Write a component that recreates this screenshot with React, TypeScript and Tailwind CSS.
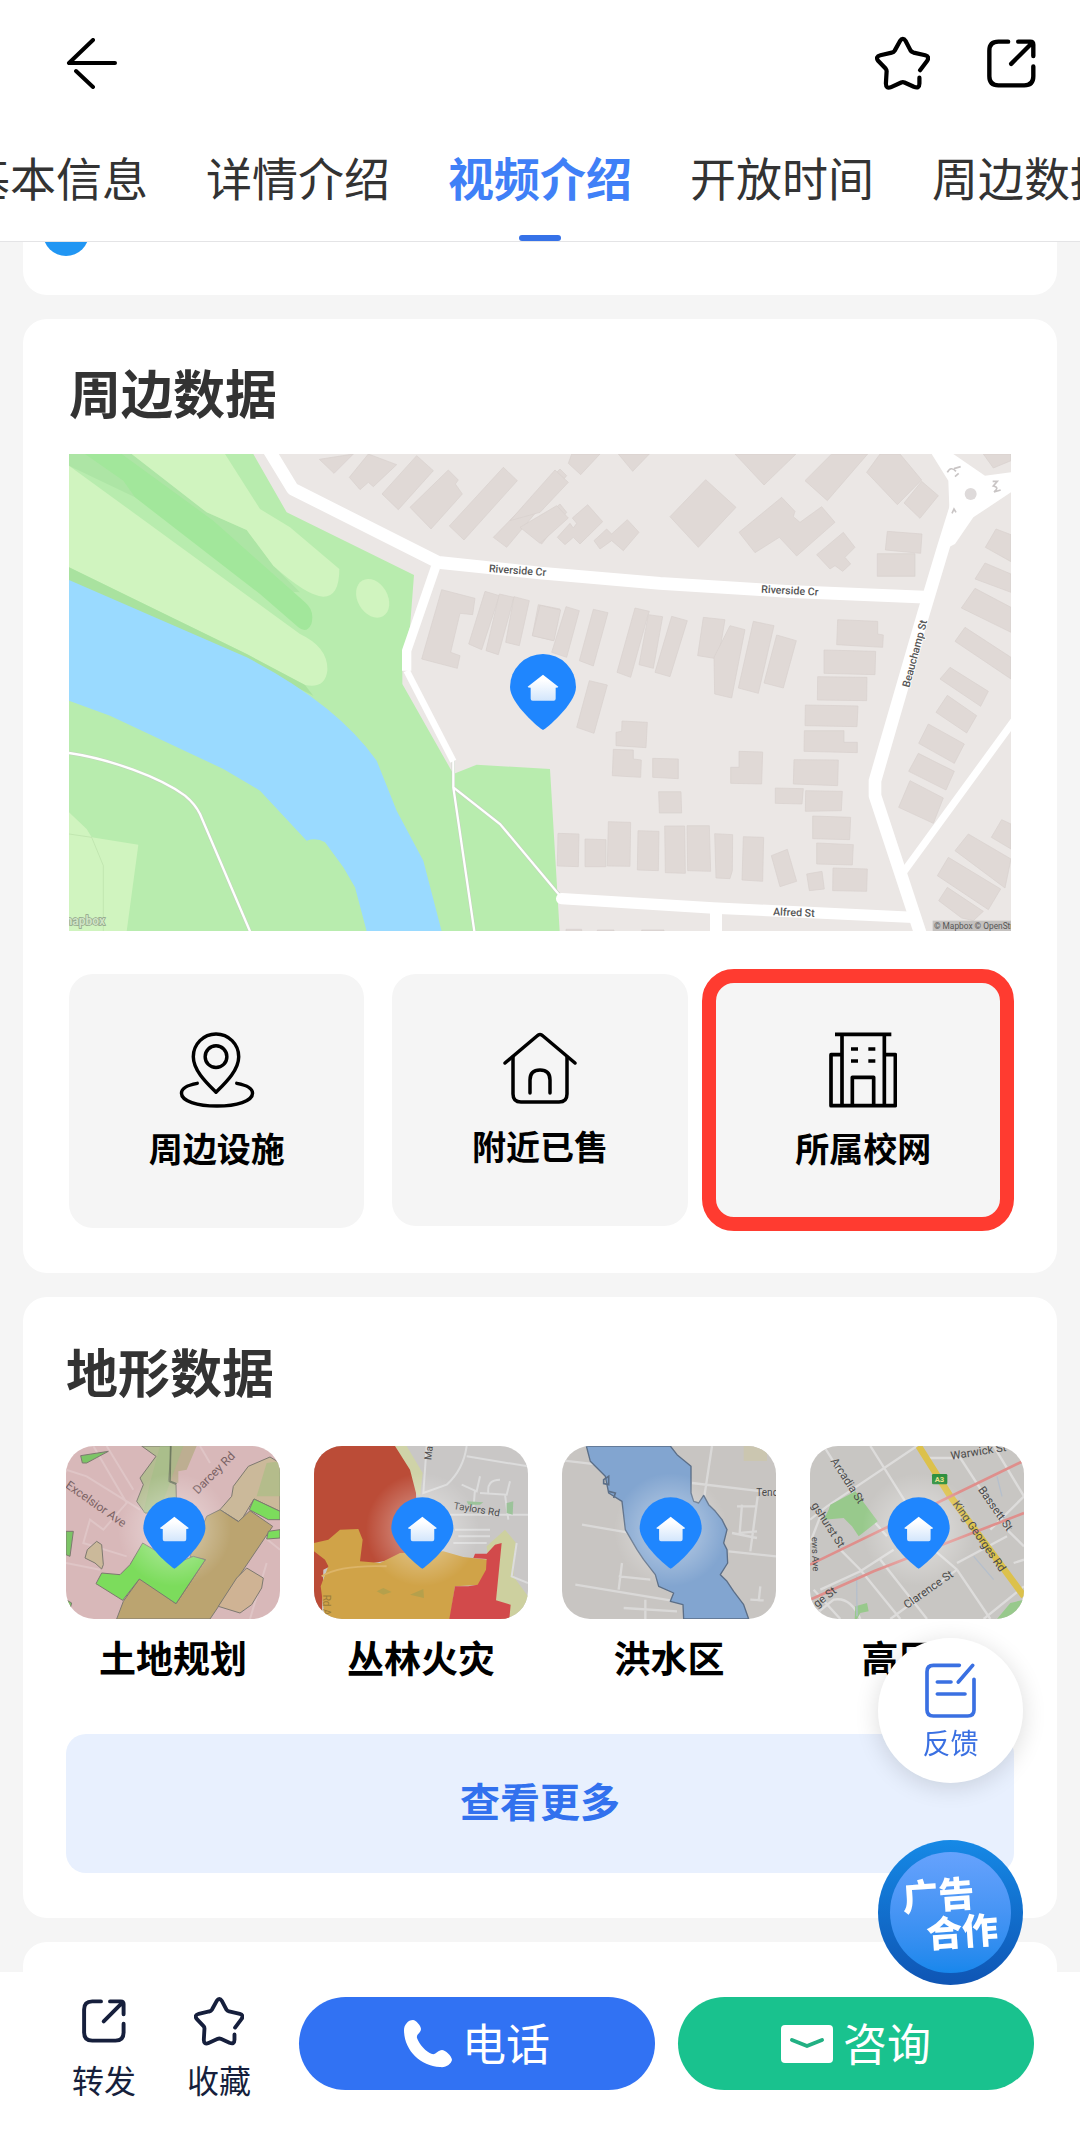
import React, { useState } from "react";
import clsx from "clsx";

const tabs = ["基本信息", "详情介绍", "视频介绍", "开放时间", "周边数据"];

type IconProps = { className?: string };

/* ---------- icons ---------- */

const BackIcon = ({ className }: IconProps) => (
    <svg viewBox="66 38 51 51" className={className} fill="none" stroke="currentColor" strokeWidth="4" strokeLinecap="round" strokeLinejoin="round">
        <path d="M93 40L69 63H115M76 71L93 87" />
    </svg>
);

const StarIcon = ({ className }: IconProps) => (
    <svg viewBox="42 44 168 166" className={className} fill="none" stroke="currentColor" strokeWidth="13" strokeLinecap="round" strokeLinejoin="round">
        <path d="M180 149L202 120Q210 107 196 103L160 95Q154 93 151 89L136 60Q127 46 118 60L102 89Q99 94 93 95L58 103Q42 107 51 120L74 144Q78 149 77 155L75 190Q75 208 91 201L122 187Q127 185 132 187L161 200Q178 207 178 190L178 172" />
    </svg>
);

const ShareIcon = ({ className }: IconProps) => (
    <svg viewBox="380 57 146 146" className={className} fill="none" stroke="currentColor" strokeWidth="13" strokeLinecap="round" strokeLinejoin="round">
        <path d="M443 65H414Q387 65 387 92V168Q387 195 414 195H491Q518 195 518 168V139" />
        <path d="M473 65H509Q518 65 518 74V108M514 69L452 131" />
    </svg>
);

const PlaceIcon = () => (
    <svg viewBox="1 0 76 77" className="w-[76px] h-[76px]" fill="none" stroke="currentColor" strokeWidth="3.5" strokeLinecap="round" strokeLinejoin="round">
        <path d="M38 61C29 52 15 39 15 25A23 23 0 0 1 61 25C61 39 47 52 38 61Z" />
        <circle cx="38" cy="25" r="11" />
        <path d="M18 52C7 54 2 58 2 62C2 70 18 75 38 75S74 70 74 62C74 58 69 54 58 52" transform="translate(1 0)" />
    </svg>
);

const HouseIcon = () => (
    <svg viewBox="0 0 76 74" className="w-[76px] h-[74px]" fill="none" stroke="currentColor" strokeWidth="3.5" strokeLinecap="round" strokeLinejoin="round">
        <path d="M3 31L35 4Q38 1 41 4L73 31" />
        <path d="M11 25V62Q11 70 19 70H57Q65 70 65 62V25" />
        <path d="M28 61V48Q28 38 38 38T48 48V61" />
    </svg>
);

const SchoolIcon = () => (
    <svg viewBox="446 244 204 228" className="w-[68px] h-[76px]" fill="none" stroke="currentColor" strokeWidth="11" strokeLinejoin="round">
        <path d="M464 251H633M485 251V465M612 251V465" />
        <path d="M485 312H452V465H645V312H612M516 465V380H580V465" />
        <path d="M512 295h21M564 295h21M512 331h21M564 331h21" />
    </svg>
);

const FeedbackIcon = () => (
    <svg viewBox="255 135 153 165" className="w-[51px] h-[55px]" fill="none" stroke="currentColor" strokeWidth="11" strokeLinecap="round" strokeLinejoin="round">
        <path d="M358 142H280Q261 142 261 161V276Q261 294 280 294H383Q402 294 402 276V184" />
        <path d="M398 142L355 192M292 192H333M292 228H375" />
    </svg>
);

const PhoneIcon = () => (
    <svg viewBox="0 0 48 48" className="w-12 h-12" fill="currentColor">
        <path d="M9 0C4 0 0 5 0 10C0 30 16 46 36 47C42 48 47 44 48 40C48 36 41 30 38 30C34 30 32 35 28 34C22 32 15 24 13 18C12 14 17 13 17 9C17 6 12 0 9 0Z" />
    </svg>
);

const MailIcon = () => (
    <svg viewBox="0 0 52 38" className="w-[52px] h-[38px]">
        <rect width="52" height="38" rx="4" fill="#fff" />
        <path d="M11 15L26 21L41 15" fill="none" stroke="#22b083" strokeWidth="4" strokeLinecap="round" strokeLinejoin="round" />
    </svg>
);

/* ---------- maps ---------- */

const Pin = ({ x, y, scale = 1 }: { x: number; y: number; scale?: number }) => (
    <g transform={`translate(${x} ${y}) scale(${scale})`}>
        <path d="M99 228C92 226 0 150 0 99A99 99 0 0 1 198 99C198 150 106 226 99 228Z" fill="#1f86fe" />
        <path d="M99 62L145 98Q145 101 137 101V134Q137 140 131 140H68Q62 140 62 134V101Q53 101 53 98Z" fill="url(#house)" />
    </g>
);

const blocksWest = [
    "778,56 880,40 822,98", "925,40 1010,72 940,138 925,125 900,147 868,110",
    "1070,45 1120,90 1015,207 966,160", "1165,88 1195,118 1186,130 1207,160 1113,265 1050,200",
    "1330,80 1372,120 1212,298 1168,256", "1500,85 1520,105 1340,320 1300,290",
    "1500,190 1520,215 1445,310 1407,275", "1145,447 1245,473 1238,522 1200,518 1172,635 1200,645 1192,683 1085,655",
    "1275,452 1318,465 1265,627 1226,610", "1318,460 1362,470 1315,642 1278,630", "1362,468 1408,480 1378,615 1337,605",
    "1435,492 1500,505 1480,600 1417,585",
];

const blocksEast = [
    "95,40 180,40 122,102 85,68", "235,40 328,40 278,92", "45,88 85,125 0,215 -90,240", "50,195 85,232 0,308 -60,260",
    "143,192 188,243 120,310 100,290 75,312 52,290 90,248 100,262 110,248 97,232", "262,237 297,275 250,330 215,300 180,325 162,300 200,265 215,280",
    "497,117 588,200 475,320 390,228", "585,40 768,40 672,133", "725,170 765,212 760,228 780,245 845,198 885,245 770,346 718,290 645,336 597,275",
    "875,40 983,40 862,180 795,120", "1020,40 1080,40 1145,118 1072,192 980,95", "1145,122 1195,165 1140,233 1092,187",
    "910,275 945,320 915,350 932,370 908,392 885,375 870,385 830,342", "1042,272 1146,280 1142,338 1036,328", "1012,339 1125,339 1125,407 1012,407",
    "1330,40 1413,40 1413,60 1360,82", "1368,265 1413,282 1413,363 1336,320", "1335,367 1413,400 1413,455 1305,415", "1305,443 1413,500 1413,575 1264,502",
    "1275,560 1413,650 1413,715 1245,602", "1230,680 1345,752 1322,797 1200,715", "1222,764 1310,825 1280,877 1188,815",
    "1165,850 1273,910 1243,968 1136,908", "1135,938 1243,992 1218,1048 1106,992", "1110,1020 1210,1072 1180,1148 1076,1100",
    "1385,1137 1413,1150 1413,1225 1354,1190", "1285,1180 1413,1255 1395,1342 1245,1230", "1225,1250 1382,1345 1345,1407 1192,1305", "1222,1340 1330,1412 1300,1440 1265,1432 1196,1380",
    "0,494 62,508 42,600 -23,585", "78,498 118,510 80,650 35,635", "160,506 204,516 160,676 118,660", "285,502 328,512 322,530 272,710 231,695",
    "325,522 368,528 340,683 297,672", "395,527 442,540 390,708 345,695", "148,720 202,733 162,878 110,860",
    "490,530 555,537 535,655 473,645", "570,555 615,567 575,772 524,760 522,650", "640,542 702,555 655,758 595,742", "710,583 769,600 730,742 672,727",
    "893,537 1013,542 1013,580 1030,583 1028,620 890,612", "852,628 1007,632 1005,702 852,698", "833,708 981,710 980,780 832,778", "796,793 954,796 951,858 795,855",
    "793,870 912,870 912,905 952,905 952,936 792,932", "762,957 895,958 893,1035 760,1030", "706,1042 790,1044 786,1090 706,1088", "797,1050 907,1052 904,1110 796,1112",
    "818,1126 932,1130 929,1197 818,1194", "830,1207 940,1212 937,1273 830,1270", "879,1282 982,1285 980,1352 878,1350",
    "246,841 322,845 318,921 228,915 228,875 245,872", "220,926 280,928 280,955 304,958 302,1010 217,1005", "338,953 415,955 415,1014 338,1010",
    "597,932 668,934 665,1030 572,1028 572,980 597,980", "356,1053 423,1053 425,1117 358,1117",
    "54,1178 117,1180 115,1278 52,1276", "135,1195 198,1197 198,1278 135,1278", "205,1143 272,1145 270,1277 202,1276", "294,1170 357,1172 355,1290 292,1288",
    "374,1156 434,1156 436,1298 376,1296", "441,1155 508,1155 512,1292 443,1290", "524,1179 578,1182 577,1290 570,1314 528,1312", "610,1188 671,1190 668,1322 606,1318",
    "742,1226 770,1322 720,1338 694,1245", "800,1300 846,1292 853,1345 808,1350",
    "78,1466 125,1466 125,1472 78,1472", "172,1468 222,1468 222,1472 172,1472", "305,1468 372,1468 372,1472 305,1472",
];

const AreaMap = () => (
    <svg viewBox="27 40 2826 1432" className="block w-full h-auto" fontFamily="Roboto, sans-serif" role="img" aria-label="周边地图">
        <defs>
            <linearGradient id="house" x1="0" y1="0" x2="0" y2="1">
                <stop offset="0.2" stopColor="#fff" />
                <stop offset="1" stopColor="#d3e6fc" />
            </linearGradient>
        </defs>
        <rect x="27" y="40" width="2826" height="1432" fill="#ebe7e5" />

        {/* park and river */}
        <path d="M27 40H580L680 215L1062 403L1050 560L1027 640V730L1180 1000L1250 972L1470 985L1499 1472H27Z" fill="#b8ecae" />
        <path d="M27 40H215L440 215L560 268L640 375L720 455L640 450L225 170L27 75Z" fill="#ade5a5" />
        <path d="M27 75L720 580Q805 620 802 690Q795 745 735 733L560 640L27 380Z" fill="#d0f4bf" />
        <path d="M27 380L560 640L735 733L760 765L560 665L27 430Z" fill="#a9e29f" />
        <path d="M215 40H495L600 205L690 260L838 385Q838 468 790 468Q740 465 640 375L560 268L440 215Z" fill="#d0f4bf" />
        <path d="M75 40H185L460 240L735 485Q765 510 754 550Q740 580 715 560L600 460L225 170L190 120Z" fill="#a2e79b" />
        <ellipse cx="938" cy="473" rx="45" ry="62" transform="rotate(-30 938 473)" fill="#d0f4bf" />
        <path d="M27 418L560 650Q830 790 950 960L1010 1110L1090 1260L1145 1472H920L885 1340L850 1280L795 1205Q770 1190 740 1200L600 1050L490 985L150 825L27 780Z" fill="#9adaff" />
        <path d="M27 1115L80 1165L95 1190L235 1212L200 1472H27Z" fill="#d0f4bf" />
        <path d="M27 1180L95 1190L130 1275V1472" fill="none" stroke="#b9dfa9" strokeWidth="2" />

        <g fill="#e0d9d6" stroke="#d8d0cd" strokeWidth="2">
            {blocksWest.map((points) => <polygon key={points} points={points} />)}
        </g>
        <g fill="#e0d9d6" stroke="#d8d0cd" strokeWidth="2" transform="translate(1440 0)">
            {blocksEast.map((points) => <polygon key={points} points={points} />)}
        </g>

        {/* footpaths */}
        <g fill="none" stroke="#c5cfc0" strokeWidth="10">
            <path d="M27 937C150 955 300 1010 375 1065Q405 1090 420 1120L570 1472M1180 960V1040L1243 1472M1180 1040L1320 1150L1500 1365" />
        </g>
        <g fill="none" stroke="#fff" strokeWidth="7">
            <path d="M27 937C150 955 300 1010 375 1065Q405 1090 420 1120L570 1472M1180 960V1040L1243 1472M1180 1040L1320 1150L1500 1365" />
        </g>

        {/* streets */}
        <g fill="none" stroke="#fff" strokeLinejoin="round">
            <path d="M628 30L698 145L1135 365L1440 397L1800 428L2180 452L2610 470" strokeWidth="38" />
            <path d="M1128 375L1040 630V690" strokeWidth="28" />
            <path d="M1040 690L1180 962" strokeWidth="20" />
            <path d="M2700 160L2650 320L2590 520L2445 1020V1065L2585 1490" strokeWidth="38" />
            <path d="M2862 840L2530 1295" strokeWidth="22" />
            <path d="M1505 1374L1960 1402L2560 1430" strokeWidth="34" strokeLinecap="round" />
            <path d="M1968 1400V1480" strokeWidth="36" />
        </g>
        <path d="M2615 40H2680L2775 105L2853 95V155L2740 230L2685 310L2645 330L2668 200L2665 120Z" fill="#fff" />
        <circle cx="2732" cy="160" r="18" fill="#dedada" />
        <g fill="none" stroke="#c9c5c5" strokeWidth="5">
            <path d="M2662 95Q2672 75 2688 92M2682 84L2702 78M2685 108L2696 98M2798 122H2812L2800 136Q2820 140 2802 154L2822 148M2676 218L2682 205L2688 215" />
        </g>

        <g fill="#555" fontSize="32" fontWeight="500" stroke="#fff" strokeWidth="5" paintOrder="stroke">
            <text x="1286" y="394" transform="rotate(4 1286 394)">Riverside Cr</text>
            <text x="2103" y="456" transform="rotate(3 2103 456)">Riverside Cr</text>
            <text x="2548" y="742" transform="rotate(-75 2548 742)">Beauchamp St</text>
            <text x="2139" y="1424" transform="rotate(2 2139 1424)">Alfred St</text>
        </g>
        <rect x="2618" y="1440" width="235" height="32" fill="#c4c1bf" />
        <text x="2622" y="1466" fontSize="25" fill="#555">© Mapbox © OpenStreetMap</text>
        <text x="6" y="1454" fontSize="36" fontWeight="700" fill="#cfe4c5" stroke="#8fa088" strokeWidth="4" paintOrder="stroke">mapbox</text>

        <Pin x={1350} y={640} />
    </svg>
);

const ThumbFrame = ({ viewBox, pinX, children }: { viewBox: string; pinX: number; children: React.ReactNode }) => (
    <svg viewBox={viewBox} className="block w-[214px] h-[173px] rounded-[28px] font-normal" fontFamily="Roboto, sans-serif" fontSize="36" fill="#4a4a4a">
        <defs>
            <radialGradient id="glow">
                <stop offset="0.4" stopColor="#fff" stopOpacity="0.3" />
                <stop offset="1" stopColor="#fff" stopOpacity="0" />
            </radialGradient>
        </defs>
        {children}
        <circle cx={pinX} cy="600" r="170" fill="url(#glow)" />
        <Pin x={pinX - 93} y={503} scale={0.94} />
    </svg>
);

const ZoningThumb = () => (
    <ThumbFrame viewBox="48 349 642 519" pinX={373}>
        <rect x="48" y="349" width="642" height="519" fill="#d8b8b9" />
        <g fill="none" stroke="#dfc5c6" strokeWidth="6">
            <path d="M130 349L230 520L160 600L120 570L100 640L230 680M48 420L110 440L270 540M48 700L150 720M170 349L250 480M450 349L480 400M650 700L600 868M640 620L690 660" />
        </g>
        <g stroke="#7d7970" strokeWidth="3">
            <path d="M275 349L318 380L270 445L280 465L260 515L285 550H380L378 465L355 455L365 349Z" fill="#b4bd92" />
            <path d="M365 349L362 455L385 460V425L410 420L440 349Z" fill="#bdae91" stroke="none" />
            <path d="M690 400L660 382L595 410L550 470L545 500L510 540L570 578L612 508L690 545Z" fill="#cbb99a" />
            <path d="M470 560L510 540L565 576L600 543L668 590L480 868H200L220 815L270 745L378 822L466 690L420 680Z" fill="#bba470" />
            <path d="M278 640L240 705L210 735L155 730L138 762L218 812L268 748L378 822L466 690L430 680L380 700Z" fill="#7cdc5c" />
            <path d="M598 540L612 508L690 545V570L655 570Z" fill="#7cdc5c" />
            <path d="M655 605L690 600V625L650 628Z" fill="#7cdc5c" />
            <path d="M92 378L175 365L110 400H97Z" fill="#7cc466" />
            <path d="M48 605H70L60 680L48 675Z" fill="#7cc466" />
            <path d="M48 810L65 820L58 845L48 850Z" fill="#7cc466" />
            <path d="M140 635L155 645L160 705L155 718L135 700L105 685L112 660Z" fill="#cbb99a" />
            <path d="M590 715L640 745L635 775L605 825L570 850L505 830L560 745Z" fill="#cfb394" />
        </g>
        <path d="M650 400L690 395V500L620 500Z" fill="#a9bd85" opacity="0.7" />
        <path d="M330 349H400L330 540L280 550L300 460Z" fill="#9fbf84" opacity="0.5" />
        <path d="M362 349L360 455L380 462" fill="none" stroke="#6f7a60" strokeWidth="5" />
        <g fill="#7a6264">
            <text x="44" y="472" transform="rotate(35 44 472)">Excelsior Ave</text>
            <text x="443" y="495" transform="rotate(-45 443 495)">Darcey Rd</text>
        </g>
    </ThumbFrame>
);

const FireThumb = () => (
    <ThumbFrame viewBox="792 349 642 519" pinX={1117}>
        <rect x="792" y="349" width="642" height="519" fill="#c9c7c6" />
        <path d="M1035 349H1070L1118 430L1110 500L1080 480Z" fill="#cfd3a8" />
        <path d="M1310 650L1365 600L1398 640L1390 740L1434 800V868H1330Z" fill="#cdd09f" />
        <g fill="none" stroke="#dcdcdc" strokeWidth="6">
            <path d="M1250 349Q1240 420 1190 465L1120 490L1130 349M1250 380L1434 410M1235 465L1280 485L1290 440M1275 480L1270 540M1290 490L1370 495L1380 455M1315 490Q1310 450 1350 450M1365 495L1375 570M1200 555H1434M1215 600H1320M1225 620H1320M1210 640H1310M1400 640L1385 740L1434 760" />
        </g>
        <path d="M1370 520L1390 515L1388 555L1370 550ZM1250 515L1300 518L1290 525H1255Z" fill="#9cc39a" />
        <path d="M792 349H1035L1080 420L1098 490L1100 560V640L1080 680L1000 695L940 705H850L820 720L815 868H792Z" fill="#bb4c37" />
        <path d="M792 640L835 630L870 600L925 598L938 630L930 695L990 700L1050 670L1180 665L1240 682L1316 690L1300 765L1215 770L1200 868H825L812 770L835 710L825 690L792 665Z" fill="#d0a348" />
        <path d="M1355 640L1338 812L1382 825L1378 868H1198L1215 770L1255 770L1283 765L1308 720L1310 688L1270 685L1275 672L1310 672L1335 645Z" fill="#d24a4b" />
        <path d="M815 740Q870 705 1010 710" fill="none" stroke="#dcb468" strokeWidth="6" />
        <path d="M980 785L1000 775L1025 787L1000 795ZM1080 795L1120 778L1122 805Z" fill="#b5a04c" />
        <text x="1210" y="538" fontSize="30" transform="rotate(9 1210 538)">Taylors Rd</text>
        <text x="1144" y="392" fontSize="30" transform="rotate(-84 1144 392)">Marsden</text>
        <text x="818" y="795" fontSize="30" fill="#9a7c3a" transform="rotate(90 818 795)">Rd Ay</text>
    </ThumbFrame>
);

const FloodThumb = () => (
    <ThumbFrame viewBox="65 349 642 519" pinX={391}>
        <rect x="65" y="349" width="642" height="519" fill="#c8c5c2" />
        <rect x="610" y="349" width="70" height="45" fill="#cbc6b0" />
        <g fill="none" stroke="#dad9d8" strokeWidth="7">
            <path d="M65 392L175 405M515 349L492 500M455 460L707 490M590 530H650M605 525L598 610L650 605M652 500L630 665M565 665L707 680M575 610L650 625M125 585L260 608M105 765L390 812M245 700L235 780M235 740L330 750M250 835L410 845M315 810V868M660 770L655 815M630 810L670 812" />
        </g>
        <path d="M138 349L150 395L195 440L205 490L245 515L255 600L290 660L310 690L345 735L355 770L400 790L390 815L428 825L430 868H625L610 825L580 785L560 755L540 735L562 700L560 660L550 640L560 600L545 570L525 545L505 525L490 497L475 520L460 515L452 490V410L410 375L390 349Z" fill="#82a5d0" stroke="#5b6e87" strokeWidth="4" strokeLinejoin="round" />
        <path d="M190 450L205 440V465L190 462ZM205 485L225 490L220 505" fill="none" stroke="#5b6e87" strokeWidth="5" />
        <text x="648" y="500" fontSize="30">Tenops</text>
    </ThumbFrame>
);

const PowerThumb = () => (
    <ThumbFrame viewBox="809 349 642 519" pinX={1135}>
        <rect x="809" y="349" width="642" height="519" fill="#c8c6c3" />
        <g fill="none" stroke="#dddcdb" strokeWidth="7">
            <path d="M850 349L970 540L1040 620M990 349L1110 540M1130 349L860 530L809 570M1160 385H1260L1400 600L1451 650M1360 349L1451 500M900 660L960 720L1080 868M840 780L960 725L1060 660M1020 690L1160 868M1250 700L1400 620M1250 720L1350 868M1250 720L1180 660M1250 720L1050 868M1420 700L1451 690M1451 500L1350 600M830 850L880 810Q930 800 960 868M820 780L900 868M1330 868L1451 770" />
            <path d="M809 640L840 560" />
        </g>
        <path d="M865 540L870 525L945 485L1012 575L955 620L935 590L910 565L850 570Z" fill="#98c98c" />
        <path d="M945 830L980 820L985 845L960 850L950 868H943ZM1370 868L1410 820L1451 810V868Z" fill="#98c98c" />
        <path d="M1300 680L1360 750M1370 440L1385 500M949 740L950 860" fill="none" stroke="#b5bfcc" strokeWidth="4" />
        <path d="M1135 349L1230 500L1451 800" fill="none" stroke="#dcc14c" strokeWidth="20" />
        <path d="M809 705L1451 393M809 810L1000 725L1451 550" fill="none" stroke="#df8f8c" strokeWidth="8" />
        <rect x="1175" y="433" width="46" height="31" rx="4" fill="#2f9140" />
        <text x="1183" y="457" fontSize="23" fontWeight="700" fill="#e8e08a">A3</text>
        <g fontSize="34">
            <text x="870" y="394" transform="rotate(57 870 394)">Arcadia St</text>
            <text x="1233" y="390" transform="rotate(-9 1233 390)">Warwick St</text>
            <text x="1312" y="480" transform="rotate(55 1312 480)">Bassett St</text>
            <text x="1236" y="523" transform="rotate(55 1236 523)">King Georges Rd</text>
            <text x="1100" y="838" transform="rotate(-35 1100 838)">Clarence St</text>
            <text x="812" y="527" transform="rotate(57 812 527)">gshurst St</text>
            <text x="830" y="835" transform="rotate(-38 830 835)">ge St</text>
            <text x="814" y="622" fontSize="28" transform="rotate(88 814 622)">ews Ave</text>
        </g>
    </ThumbFrame>
);

/* ---------- page ---------- */

const nearby = [
    { name: "周边设施", Icon: PlaceIcon },
    { name: "附近已售", Icon: HouseIcon },
    { name: "所属校网", Icon: SchoolIcon, highlighted: true },
];

const terrain = [
    { name: "土地规划", Thumb: ZoningThumb },
    { name: "丛林火灾", Thumb: FireThumb },
    { name: "洪水区", Thumb: FloodThumb },
    { name: "高压线", Thumb: PowerThumb },
];

const Header = () => {
    const [active, setActive] = useState("视频介绍");

    return (
        <header className="sticky top-0 z-10 bg-white border-b border-[#e4e4e6]">
            <div className="flex h-[126px] items-center pl-[66px] pr-11 text-black">
                <button aria-label="返回"><BackIcon className="w-[51px] h-[51px]" /></button>
                <div className="ml-auto flex items-center gap-[57px]">
                    <button aria-label="收藏"><StarIcon className="w-[55px] h-[54px]" /></button>
                    <button aria-label="分享"><ShareIcon className="w-[49px] h-[49px]" /></button>
                </div>
            </div>
            <nav className="flex justify-center gap-[58px] overflow-hidden">
                {tabs.map((tab) => (
                    <button
                        key={tab}
                        onClick={() => setActive(tab)}
                        className={clsx(
                            "flex shrink-0 flex-col items-center gap-[35px] pt-[26px] text-[46px] leading-[48px] whitespace-nowrap",
                            tab === active ? "font-bold text-[#3f80f7]" : "text-[#333]"
                        )}
                    >
                        {tab}
                        <span className={clsx("h-[6px] w-[42px] rounded-sm", tab === active && "bg-[#3672e8]")} />
                    </button>
                ))}
            </nav>
        </header>
    );
};

const Footer = () => (
    <footer className="sticky bottom-0 z-10 flex items-start bg-white pt-[25px] pb-[31px] pl-[72px] pr-[46px]">
        <div className="mr-12 flex gap-[51px] text-[32px] leading-10 text-[#161f3c]">
            <button className="flex flex-col items-center gap-[14px]">
                <span className="flex h-12 items-center"><ShareIcon className="w-11 h-11" /></span>
                转发
            </button>
            <button className="flex flex-col items-center gap-[14px]">
                <span className="flex h-12 items-center"><StarIcon className="w-[50px] h-[50px]" /></span>
                收藏
            </button>
        </div>
        <div className="flex flex-1 gap-[23px] text-[44px] leading-[60px] text-white">
            <button className="flex h-[93px] flex-1 items-center justify-center gap-[10px] rounded-full bg-[#3172f3]">
                <PhoneIcon />
                <span className="pb-1">电话</span>
            </button>
            <button className="flex h-[93px] flex-1 items-center justify-center gap-[10px] rounded-full bg-[#19c28e]">
                <MailIcon />
                <span className="pb-1">咨询</span>
            </button>
        </div>
    </footer>
);

const App = () => (
    <div className="flex min-h-screen flex-col bg-[#f5f5f5] font-['Noto_Sans_CJK_SC',sans-serif]">
        <Header />

        <main className="flex flex-1 flex-col gap-6 px-[23px]">
            <section className="h-[53px] overflow-hidden rounded-b-[24px] bg-white pl-5">
                <div className="-mt-8 h-[46px] w-[46px] rounded-full bg-[#2196f3]" />
            </section>

            <section className="rounded-[24px] bg-white px-[46px] pt-[41px] pb-[45px]">
                <h2 className="mb-[30px] text-[52px] font-bold leading-[64px] text-[#333]">周边数据</h2>
                <AreaMap />
                <div className="mt-[43px] grid grid-cols-3 items-start gap-7">
                    {nearby.map(({ name, Icon, highlighted }) => (
                        <button key={name} className="relative flex flex-col items-center gap-5 rounded-[24px] bg-[#f5f5f5] pt-[58px] pb-[60px] text-[34px] font-bold leading-10 text-black">
                            <Icon />
                            {name}
                            {highlighted && <span className="absolute -top-[5px] -right-[3px] -bottom-[3px] -left-[14px] rounded-[32px] border-[14px] border-[#ff3b30]" />}
                        </button>
                    ))}
                </div>
            </section>

            <section className="rounded-[24px] bg-white px-[43px] pt-[42px] pb-[45px]">
                <h2 className="mb-[43px] text-[52px] font-bold leading-[64px] text-[#333]">地形数据</h2>
                <div className="-mr-[43px] flex gap-[34px]">
                    {terrain.map(({ name, Thumb }) => (
                        <button key={name} className="flex shrink-0 flex-col items-center gap-[14px] text-[37px] font-bold leading-[48px] text-black">
                            <Thumb />
                            {name}
                        </button>
                    ))}
                </div>
                <button className="mt-[53px] h-[139px] w-full rounded-[20px] bg-[#e8f0fe] pb-2 text-[40px] font-bold text-[#3271ee]">
                    查看更多
                </button>
            </section>

            <section className="min-h-[30px] flex-1 rounded-t-[24px] bg-white" />
        </main>

        <Footer />

        {/* floating actions */}
        <div className="fixed right-[57px] bottom-[145px] z-20 flex flex-col gap-[57px]">
            <button className="flex h-[145px] w-[145px] flex-col items-center justify-center gap-1 rounded-full bg-white pt-1 text-[28px] leading-10 text-[#3a70e2] shadow-[0_4px_24px_rgba(0,0,0,0.14)]">
                <FeedbackIcon />
                反馈
            </button>
            <button className="h-[145px] w-[145px] rounded-full bg-linear-to-b from-[#1689e6] to-[#0f55b4] p-3">
                <span className="flex h-full w-full flex-col items-center justify-center rounded-full bg-linear-to-b from-[#66a2fd] to-[#1787ec] pb-1 text-[36px] font-black leading-[38px] text-white">
                    <span className="-rotate-4 pr-6">广告</span>
                    <span className="-rotate-4 pl-6">合作</span>
                </span>
            </button>
        </div>
    </div>
);

export default App;
